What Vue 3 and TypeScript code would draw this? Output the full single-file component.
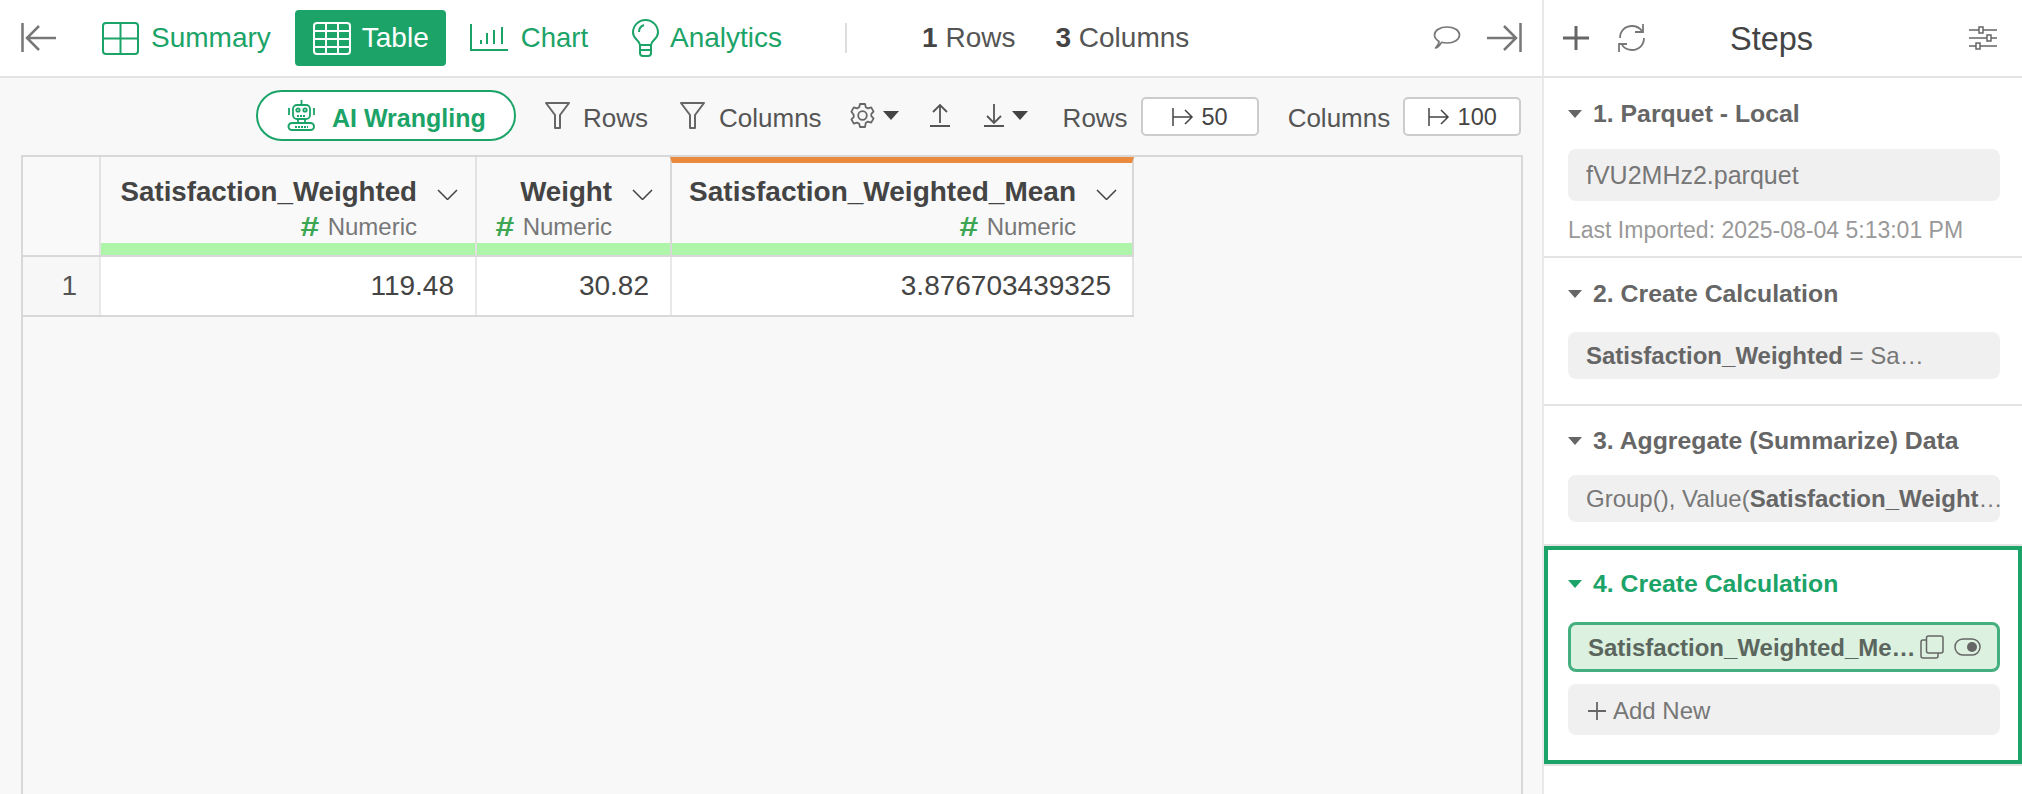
<script setup lang="ts">
interface Col { name: string; value: string; width: number; added?: boolean }
const cols: Col[] = [
  { name: 'Satisfaction_Weighted', value: '119.48', width: 376 },
  { name: 'Weight', value: '30.82', width: 195 },
  { name: 'Satisfaction_Weighted_Mean', value: '3.876703439325', width: 464, added: true },
]
</script>

<template>
  <div class="app">
    <div class="main">
      <header class="topbar">
        <svg class="ic back" width="36" height="30" viewBox="0 0 36 30" fill="none" stroke="#777" stroke-width="2.500"><path d="M1.500 0v29M35 15H6M18 3 6 15l12 12"/></svg>
        <a class="tab summary">
          <svg width="37" height="33" viewBox="0 0 37 33" fill="none" stroke="#1ba368" stroke-width="2"><rect x="1" y="1" width="35" height="31" rx="3"/><path d="M18.500 1v31M1 16.500h35"/></svg>
          <span>Summary</span>
        </a>
        <a class="tab active">
          <svg width="38" height="33" viewBox="0 0 38 33" fill="none" stroke="#fff" stroke-width="2"><rect x="1" y="1" width="36" height="31" rx="3"/><path d="M1 9h36M1 17h36M1 25h36M13 1v31M25 1v31"/></svg>
          <span>Table</span>
        </a>
        <a class="tab chart">
          <svg width="38" height="28" viewBox="0 0 38 28" fill="none" stroke="#1ba368" stroke-width="2"><path d="M1 0v26h37M11 16v4M17 9v11M24 6v14M32 3v17"/></svg>
          <span>Chart</span>
        </a>
        <a class="tab analytics">
          <svg width="27" height="39" viewBox="0 0 27 39" fill="none" stroke="#1ba368" stroke-width="2"><path d="M8 26C7.500 21 1 20 1 13.500a12.500 12.500 0 0 1 25 0C26 20 19.500 21 19 26zM8 26v8a3 3 0 0 0 3 3h5a3 3 0 0 0 3-3v-8M8 31h11M7 13c0-4 2-6 5-7"/></svg>
          <span>Analytics</span>
        </a>
        <i class="sep"></i>
        <span class="count rows-count"><b>1</b> Rows</span>
        <span class="count cols-count"><b>3</b> Columns</span>
        <svg class="chat" width="28" height="24" viewBox="0 0 28 24" fill="none" stroke="#777" stroke-width="1.700" stroke-linejoin="round"><path d="M6 15.500C3 13.500 1.500 12 1.500 9 1.500 4.500 7 1 14 1s12.500 3.500 12.500 8S21 17 14 17c-2 0-3.500-.2-5.500-.7C7 19 5 21.500 2.500 22 4.500 20 6 18 6 15.500z"/></svg>
        <svg class="ic" width="35" height="30" viewBox="0 0 35 30" fill="none" stroke="#777" stroke-width="2.500"><path d="M33.500 0v29M0 15h29M17 3l12 12-12 12"/></svg>
      </header>

      <div class="toolbar">
        <button class="ai">
          <svg width="28" height="31" viewBox="0 0 28 31" fill="none" stroke="#1ba368" stroke-width="1.800">
            <path d="M14.500 0v5"/><rect x="6" y="5" width="17" height="14" rx="4"/><circle cx="11" cy="10" r="1.700"/><circle cx="18" cy="10" r="1.700"/><path d="M10 16h9" stroke-dasharray="2 1"/><path d="M2 8v7M27 8v7M11 19v4M18 19v4"/><rect x="1.500" y="23" width="25.500" height="7" rx="3.500" stroke-width="2"/><path d="M8 27h13" stroke-dasharray="2 1"/>
          </svg>
          <span>AI Wrangling</span>
        </button>
        <svg class="filter f1" width="25" height="27" viewBox="0 0 25 27" fill="none" stroke="#666" stroke-width="2"><path d="M1 1h23l-9 12v13h-5V13z" stroke-linejoin="round"/></svg>
        <span class="tl rows-l">Rows</span>
        <svg class="filter f2" width="25" height="27" viewBox="0 0 25 27" fill="none" stroke="#666" stroke-width="2"><path d="M1 1h23l-9 12v13h-5V13z" stroke-linejoin="round"/></svg>
        <span class="tl cols-l">Columns</span>
        <svg class="gear" width="25" height="25" viewBox="0 0 25 25" fill="none" stroke="#666" stroke-width="1.800"><path d="M10 1h5l.8 3.200 2.200 1.200 3.200-1 2.400 4.200-2.300 2.300v2.200l2.300 2.300-2.400 4.200-3.200-1-2.200 1.200L15 24h-5l-.8-3.200-2.200-1.200-3.200 1L1.400 16.400l2.300-2.300v-2.200L1.400 8.600l2.400-4.200 3.200 1 2.200-1.200z" stroke-linejoin="round"/><circle cx="12.500" cy="12.500" r="4.300"/></svg>
        <i class="caret c1"></i>
        <svg class="arrow up" width="20" height="23" viewBox="0 0 20 23" fill="none" stroke="#555" stroke-width="1.800"><path d="M10 19V1M3 8l7-7 7 7M0 22h20"/></svg>
        <svg class="arrow down" width="20" height="23" viewBox="0 0 20 23" fill="none" stroke="#555" stroke-width="1.800"><path d="M10 0v19M3 12l7 7 7-7M0 22h20"/></svg>
        <i class="caret c2"></i>
        <span class="tl rows-lim">Rows</span>
        <span class="limit"><svg width="22" height="18" viewBox="0 0 22 18" fill="none" stroke="#444" stroke-width="1.500"><path d="M1 0v18M1 9h19M13 2l7 7-7 7"/></svg><span>50</span></span>
        <span class="tl cols-lim">Columns</span>
        <span class="limit"><svg width="22" height="18" viewBox="0 0 22 18" fill="none" stroke="#444" stroke-width="1.500"><path d="M1 0v18M1 9h19M13 2l7 7-7 7"/></svg><span>100</span></span>
      </div>

      <div class="grid-frame">
        <div class="grid">
          <div class="head">
            <div class="corner"></div>
            <div v-for="c in cols" :key="c.name" class="hcell" :class="{ added: c.added }" :style="{ width: c.width + 'px' }">
              <div class="hname">
                <span>{{ c.name }}</span>
                <svg width="21" height="11" viewBox="0 0 21 11" fill="none" stroke="#444" stroke-width="1.500"><path d="M1 1l9.500 9.500L20 1"/></svg>
              </div>
              <div class="htype"><b>#</b><span>Numeric</span></div>
              <div class="hbar"></div>
            </div>
          </div>
          <div class="row">
            <div class="rownum">1</div>
            <div v-for="c in cols" :key="c.name" class="cell" :style="{ width: c.width + 'px' }">{{ c.value }}</div>
          </div>
        </div>
      </div>
    </div>

    <aside class="panel">
      <div class="phead">
        <svg class="p-plus" width="26" height="24" viewBox="0 0 26 24" fill="none" stroke="#666" stroke-width="3"><path d="M13 0v24M0 12h26"/></svg>
        <svg class="p-ref" width="28" height="28" viewBox="0 0 28 28" fill="none" stroke="#777" stroke-width="1.800"><path d="M2 14C2 7 7 2 14 2c4 0 7 1 10 5M26 14c0 7-5 12-12 12-4 0-7-1-10-5M25 0v8h-8M1 28v-8h8"/></svg>
        <span class="p-title">Steps</span>
        <svg class="p-set" width="28" height="24" viewBox="0 0 28 24" fill="none" stroke="#666" stroke-width="1.500"><path d="M0 4h28M0 12h28M0 20h28"/><rect x="10" y="1" width="4" height="6" fill="#fff"/><rect x="18" y="9" width="4" height="6" fill="#fff"/><rect x="7" y="17" width="4" height="6" fill="#fff"/></svg>
      </div>

      <section class="step s1">
        <h3><i class="tri"></i>1. Parquet - Local</h3>
        <div class="box tall">fVU2MHz2.parquet</div>
        <p class="meta">Last Imported: 2025-08-04 5:13:01 PM</p>
      </section>
      <section class="step s2">
        <h3><i class="tri"></i>2. Create Calculation</h3>
        <div class="box"><b>Satisfaction_Weighted</b> = Sa…</div>
      </section>
      <section class="step s3">
        <h3><i class="tri"></i>3. Aggregate (Summarize) Data</h3>
        <div class="box">Group(), Value(<b>Satisfaction_Weight</b>…</div>
      </section>
      <section class="step current">
        <h3><i class="tri"></i>4. Create Calculation</h3>
        <div class="box selected">
          <b>Satisfaction_Weighted_Me…</b>
          <svg class="copy" width="24" height="24" viewBox="0 0 24 24" fill="none" stroke="#666" stroke-width="1.500"><rect x="6.500" y="1" width="16.500" height="17" rx="2"/><path d="M6.500 5H3a2 2 0 0 0-2 2v14a2 2 0 0 0 2 2h13a2 2 0 0 0 2-2v-3"/></svg>
          <svg class="eye" width="27" height="18" viewBox="0 0 27 18" fill="none" stroke="#666" stroke-width="1.500"><rect x="1" y="1" width="25" height="16" rx="8"/><circle cx="18" cy="9" r="5" fill="#666" stroke="none"/></svg>
        </div>
        <div class="box add">
          <svg width="18" height="18" viewBox="0 0 18 18" fill="none" stroke="#666" stroke-width="1.800"><path d="M9 0v18M0 9h18"/></svg>
          <span>Add New</span>
        </div>
      </section>
    </aside>
  </div>
</template>

<style scoped>
.app { display: flex; width: 2022px; height: 794px; overflow: hidden; background: #fff; font-family: "Liberation Sans", Arial, sans-serif; color: #444; }
.main { width: 1542px; height: 794px; flex: none; display: flex; flex-direction: column; background: #f8f8f8; }
.topbar { height: 76px; flex: none; box-sizing: content-box; border-bottom: 2px solid #e4e4e4; background: #fff; display: flex; align-items: center; padding-left: 21px; }
.back { margin-right: 45px; }
.tab { display: flex; align-items: center; color: #1ba368; height: 56px; font-size: 28px; border-radius: 4px; }
.tab svg { flex: none; }
.summary { gap: 12px; margin-right: 24px; }
.active { background: #1ba368; color: #fff; width: 151px; padding-left: 18px; box-sizing: border-box; gap: 11px; margin-right: 24px; }
.chart { gap: 13px; margin-right: 44px; font-size: 27.500px; }
.analytics { gap: 11px; }
.sep { width: 2px; height: 30px; background: #ddd; margin-left: 63px; }
.count { font-size: 28px; color: #555; }
.count b { color: #444; }
.rows-count { margin-left: 75px; }
.cols-count { margin-left: 40px; }
.chat { margin-left: 244px; }
.chat + svg { margin-left: 26px; }

.toolbar { height: 77px; flex: none; display: flex; align-items: center; padding-left: 256px; box-sizing: border-box; padding-bottom: 2px; }
.ai { width: 260px; height: 51px; box-sizing: border-box; border: 2px solid #1ba368; border-radius: 26px; background: #fff; display: flex; align-items: center; padding: 0 0 0 29px; gap: 17px; color: #1ba368; font: 700 25px "Liberation Sans", Arial, sans-serif; }
.ai span { padding-top: 5px; }
.tl { font-size: 26px; color: #555; margin-top: 6px; }
.f1 { margin-left: 29px; }
.rows-l { margin-left: 13px; }
.f2 { margin-left: 32px; }
.cols-l { margin-left: 14px; }
.gear { margin-left: 28px; }
.caret { width: 0; height: 0; border-left: 8px solid transparent; border-right: 8px solid transparent; border-top: 9px solid #444; }
.c1 { margin-left: 8px; }
.up { margin-left: 31px; }
.down { margin-left: 34px; }
.c2 { margin-left: 8px; }
.rows-lim { margin-left: 35px; }
.limit { width: 118px; height: 39px; box-sizing: border-box; border: 2px solid #ccc; border-radius: 5px; background: #fff; display: flex; align-items: center; justify-content: center; gap: 8px; font-size: 23.500px; margin-left: 13px; margin-top: 2px; color: #444; }
.limit span { padding-top: 2px; }
.cols-lim { margin-left: 29px; }

.grid-frame { flex: 1; margin-left: 21px; width: 1502px; box-sizing: border-box; border: 2px solid #d8d8d8; border-bottom: 0; min-height: 0; }
.grid { display: flex; flex-direction: column; width: fit-content; }
.head, .row { display: flex; }
.head { height: 98px; border-bottom: 2px solid #d8d8d8; }
.row { height: 58px; border-bottom: 2px solid #d8d8d8; }
.corner, .rownum { width: 76px; flex: none; }
.corner { background: #f9f9f9; }
.rownum { background: #f7f7f7; text-align: right; font-size: 28px; line-height: 58px; padding-right: 22px; box-sizing: border-box; color: #555; }
.hcell { box-sizing: border-box; position: relative; background: #f9f9f9; border-left: 2px solid #e2e2e2; display: flex; flex-direction: column; align-items: flex-end; padding-right: 17px; padding-top: 17px; }
.hcell.added { border-left-color: #d8d8d8; border-right: 2px solid #d8d8d8; border-top: 6px solid #ea8a3f; padding-top: 11px; padding-right: 15px; }
.hname { display: flex; align-items: center; font-size: 27.700px; font-weight: 700; color: #444; line-height: 36px; gap: 20px; white-space: nowrap; }
.hcell.added .hname { font-size: 28px; }
.hname svg { margin-top: 4px; }
.htype { display: flex; align-items: center; margin-right: 41px; font-size: 24px; color: #777; line-height: 30px; gap: 10px; margin-top: 2px; }
.htype b { color: #3da653; font-size: 28px; display: inline-block; transform: scaleX(1.2); }
.hbar { position: absolute; left: 0; right: 0; bottom: 0; height: 12px; background: #aef5a9; }
.cell { box-sizing: border-box; background: #fff; border-left: 2px solid #e8e8e8; text-align: right; font-size: 28px; line-height: 58px; padding-right: 21px; color: #444; }
.cell:last-child { border-right: 2px solid #e2e2e2; }

.panel { width: 480px; flex: none; border-left: 2px solid #e8e8e8; box-sizing: border-box; background: #fff; }
.phead { height: 76px; border-bottom: 2px solid #e4e4e4; box-sizing: content-box; display: flex; align-items: center; padding-left: 19px; }
.p-ref { margin-left: 29px; }
.p-title { font-size: 32.500px; color: #444; margin-left: 84px; padding-top: 2px; }
.p-set { margin-left: 156px; }
.step { box-sizing: border-box; padding: 21px 22px 0 24px; border-bottom: 2px solid #e4e4e4; }
.s1 { height: 180px; }
.s2 { height: 148px; }
.s3 { height: 140px; padding-top: 20px; }
h3 { margin: 0; display: flex; align-items: center; height: 30px; font-size: 24.800px; font-weight: 700; color: #666; white-space: nowrap; }
.tri { width: 0; height: 0; border-left: 7px solid transparent; border-right: 7px solid transparent; border-top: 8px solid #666; margin-right: 11px; }
.box { box-sizing: border-box; background: #f0f0f0; border-radius: 8px; height: 47px; padding-left: 18px; display: flex; align-items: center; font-size: 24px; color: #777; white-space: pre; }
.box b { color: #666; }
.tall { height: 52px; margin-top: 20px; font-size: 25px; }
.s2 .box { margin-top: 23px; }
.s3 .box { margin-top: 19px; }
.meta { margin: 17px 0 0; font-size: 23px; color: #999; line-height: 24px; white-space: nowrap; }
.current { height: 218px; padding: 19px 18px 0 20px; border: 4px solid #1ba368; box-shadow: 0 2px 0 #e4e4e4; }
.current h3 { color: #1ba368; }
.current .tri { border-top-color: #1ba368; }
.selected { height: 50px; margin-top: 23px; border: 3px solid #45b07f; background: #dcf1df; padding-left: 17px; }
.selected b { color: #5b665e; flex: 1; padding-top: 2px; }
.copy { margin-right: 10px; }
.eye { margin-right: 16px; }
.add { height: 51px; margin-top: 12px; gap: 7px; padding-left: 20px; padding-top: 2px; }
</style>
